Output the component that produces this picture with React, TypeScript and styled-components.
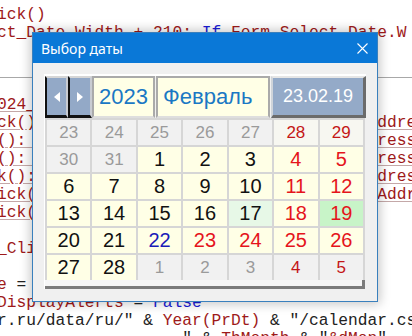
import React from "react";
import styled, { createGlobalStyle } from "styled-components";

const Global = createGlobalStyle`
  html, body { margin: 0; padding: 0; background: #ffffff; }
  body { width: 412px; height: 336px; overflow: hidden; }
`;

const Page = styled.div`
  position: relative;
  width: 412px;
  height: 336px;
  overflow: hidden;
  background: #ffffff;
`;

const Code = styled.div`
  padding-top: 6px;
  margin-left: -3px;
  font-family: "Liberation Mono", "DejaVu Sans Mono", monospace;
  font-size: 16.25px;
  line-height: 18px;
  white-space: pre;
`;

const Line = styled.div<{ $under?: boolean; $sep?: boolean }>`
  height: 18px;
  box-sizing: border-box;
  text-decoration: ${(p) => (p.$under ? "underline" : "none")};
  text-decoration-color: #c4a8a8;
  text-underline-offset: 2px;
  border-bottom: ${(p) => (p.$sep ? "1px solid #a8a8a8" : "none")};
  margin-left: ${(p) => (p.$sep ? "3px" : "0")};
`;

const Tok = styled.span<{ $c: "r" | "b" | "d" }>`
  color: ${(p) => (p.$c === "r" ? "#9e1a1a" : p.$c === "b" ? "#1c1cd6" : "#222222")};
`;

const Dialog = styled.div`
  position: absolute;
  left: 32px;
  top: 32px;
  width: 346px;
  height: 270px;
  box-sizing: border-box;
  border: 1px solid #3a80bd;
  background: #f0f0f0;
  box-shadow: 0 0 10px 2px rgba(0, 0, 0, 0.22);
  display: flex;
  flex-direction: column;
`;

const TitleBar = styled.div`
  height: 30px;
  background: #0a78d7;
  display: flex;
  align-items: center;
  justify-content: space-between;
  padding: 0 9px 0 8px;
  flex: none;
`;

const Title = styled.span`
  font-family: "Noto Sans", "Open Sans", sans-serif;
  font-size: 14px;
  color: #ffffff;
  margin-top: 1px;
`;

const Body = styled.div`
  padding: 11px 11px 0 11px;
`;

const Panel = styled.div`
  width: 322px;
  box-sizing: border-box;
  border-top: 2px solid #ffffff;
  border-left: 1px solid #ffffff;
  display: flex;
  flex-direction: column;
`;

const Header = styled.div`
  display: flex;
  height: 42px;
  width: 321px;
`;

const NavBtn = styled.div<{ $w: number }>`
  width: ${(p) => p.$w}px;
  height: 42px;
  box-sizing: border-box;
  background: #93a9c7;
  border-left: 2px solid #111111;
  border-bottom: 3px solid #111111;
  border-top: 2px solid #d6d6d6;
  border-right: 2px solid #c9ccd2;
  display: flex;
  align-items: center;
  justify-content: center;
  flex: none;
`;

const Field = styled.div<{ $w: number; $center?: boolean }>`
  width: ${(p) => p.$w}px;
  height: 42px;
  box-sizing: border-box;
  background: #ffffe6;
  border: 2px solid #aaaaaa;
  border-bottom-color: #dedede;
  display: flex;
  align-items: center;
  justify-content: ${(p) => (p.$center ? "center" : "flex-start")};
  padding-left: ${(p) => (p.$center ? "0" : "5px")};
  font-family: "Liberation Sans", Arial, sans-serif;
  font-size: 22px;
  color: #1a78c4;
  flex: none;
  margin-right: 1px;
`;

const DateBox = styled.div`
  flex: 1;
  height: 42px;
  box-sizing: border-box;
  background: #94aac8;
  border-left: 2px solid #cfd4da;
  border-top: 2px solid #e6e6e6;
  border-right: 3px solid #6b6b6b;
  border-bottom: 3px solid #6b6b6b;
  display: flex;
  align-items: center;
  justify-content: center;
  font-family: "Liberation Sans", Arial, sans-serif;
  font-size: 18px;
  color: #ffffff;
`;

const Grid = styled.div`
  width: 320px;
  box-sizing: border-box;
  display: grid;
  grid-template-columns: repeat(7, 1fr);
  grid-auto-rows: 25px;
  gap: 2px;
  padding: 2px 2px 0 2px;
  background: #d6d6d6;
`;

type Kind = "other" | "otherWk" | "day" | "wk" | "today";

const Cell = styled.div<{ $k: Kind; $bg?: string }>`
  display: flex;
  align-items: center;
  justify-content: center;
  font-family: "Liberation Sans", Arial, sans-serif;
  font-size: ${(p) => (p.$k === "other" || p.$k === "otherWk" ? "17px" : "20px")};
  background: ${(p) =>
    p.$bg ? p.$bg : p.$k === "other" || p.$k === "otherWk" ? "#f1f1f1" : "#ffffe6"};
  color: ${(p) =>
    p.$k === "other"
      ? "#9a9a9a"
      : p.$k === "otherWk"
      ? "#c41616"
      : p.$k === "wk"
      ? "#e5141c"
      : p.$k === "today"
      ? "#1b1bb8"
      : "#111111"};
`;

const Footer = styled.div`
  width: 320px;
  height: 9px;
  box-sizing: border-box;
  background: #f6f6f6;
  border-bottom: 3px solid #7c7c7c;
  border-right: 3px solid #7c7c7c;
`;

type Seg = [string, "r" | "b" | "d"];
type L = { segs: Seg[]; under?: boolean; sep?: boolean };

const pad = (l: string, r: string) => l.slice(0, 34).padEnd(39, " ") + r;

const lines: L[] = [
  { segs: [["ick()", "r"]] },
  {
    segs: [
      ["ct_Date.Width + 210:", "r"],
      [" If", "b"],
      [" Form_Select_Date.W", "r"],
    ],
  },
  { segs: [] },
  { segs: [], sep: true },
  { segs: [] },
  { segs: [["024_", "r"]], under: true },
  { segs: [[pad("ck(): Form_Select_Date.Show: X = T", "ddress"), "r"]], under: true },
  { segs: [[pad("(): Form_Select_Date.Show: Y = Tar", "ress"), "r"]], under: true },
  { segs: [[pad("(): Form_Select_Date.Show: Z = Tar", "ress"), "r"]], under: true },
  { segs: [[pad("k(): Form_Select_Date.Show: W = Ta", "dress"), "r"]], under: true },
  { segs: [[pad("ick(): Form_Select_Date.Show: V = ", "Address"), "r"]], under: true },
  { segs: [["ick(): Form_Select_Date.Hide", "r"]], under: true },
  { segs: [] },
  { segs: [["_Click()", "r"]] },
  { segs: [] },
  { segs: [["e", "r"], [" = ", "d"], ["Now", "r"]] },
  { segs: [["DisplayAlerts", "r"], [" = ", "d"], ["False", "b"]] },
  {
    segs: [
      ['r.ru/data/ru/"', "d"],
      [" & ", "d"],
      ["Year(PrDt)", "r"],
      [" & ", "d"],
      ['"/calendar.csv"', "d"],
    ],
  },
  {
    segs: [
      ['                   " & ', "d"],
      ["ThMonth", "r"],
      [' & "', "d"],
      ["&dMon", "r"],
      ['"', "d"],
    ],
  },
];

type D = { n: number; k: Kind; bg?: string };
const o = (n: number): D => ({ n, k: "other" });
const ow = (n: number): D => ({ n, k: "otherWk" });
const d = (n: number): D => ({ n, k: "day" });
const w = (n: number): D => ({ n, k: "wk" });

const days: D[] = [
  o(23), o(24), o(25), o(26), o(27), { n: 28, k: "otherWk", bg: "#f7f7f1" }, { n: 29, k: "otherWk", bg: "#f7f7f1" },
  o(30), o(31), d(1), d(2), d(3), w(4), w(5),
  d(6), d(7), d(8), d(9), d(10), w(11), w(12),
  d(13), d(14), d(15), d(16), { n: 17, k: "day", bg: "#e7f8e7" }, w(18), { n: 19, k: "wk", bg: "#c8f4c8" },
  d(20), d(21), { n: 22, k: "today" }, w(23), w(24), w(25), w(26),
  d(27), d(28), o(1), o(2), o(3), ow(4), ow(5),
];

const Arrow = ({ left }: { left?: boolean }) => (
  <svg width="6" height="10" viewBox="0 0 6 10">
    <polygon points={left ? "6,0 0,5 6,10" : "0,0 6,5 0,10"} fill="#ffffff" />
  </svg>
);

const CloseIcon = () => (
  <svg width="11" height="11" viewBox="0 0 11 11">
    <path d="M0.5 0.5 L10.5 10.5 M10.5 0.5 L0.5 10.5" stroke="#ffffff" strokeWidth="1.1" />
  </svg>
);

export default function App() {
  return (
    <Page>
      <Global />
      <Code>
        {lines.map((l, i) => (
          <Line key={i} $under={l.under} $sep={l.sep}>
            {l.segs.map(([t, c], j) => (
              <Tok key={j} $c={c}>
                {t}
              </Tok>
            ))}
          </Line>
        ))}
      </Code>
      <Dialog>
        <TitleBar>
          <Title>Выбор даты</Title>
          <CloseIcon />
        </TitleBar>
        <Body>
          <Panel>
            <Header>
              <NavBtn $w={23}>
                <Arrow left />
              </NavBtn>
              <NavBtn $w={24}>
                <Arrow />
              </NavBtn>
              <Field $w={63} $center>
                2023
              </Field>
              <Field $w={114}>Февраль</Field>
              <DateBox>23.02.19</DateBox>
            </Header>
            <Grid>
              {days.map((x, i) => (
                <Cell key={i} $k={x.k} $bg={x.bg}>
                  {x.n}
                </Cell>
              ))}
            </Grid>
            <Footer />
          </Panel>
        </Body>
      </Dialog>
    </Page>
  );
}
